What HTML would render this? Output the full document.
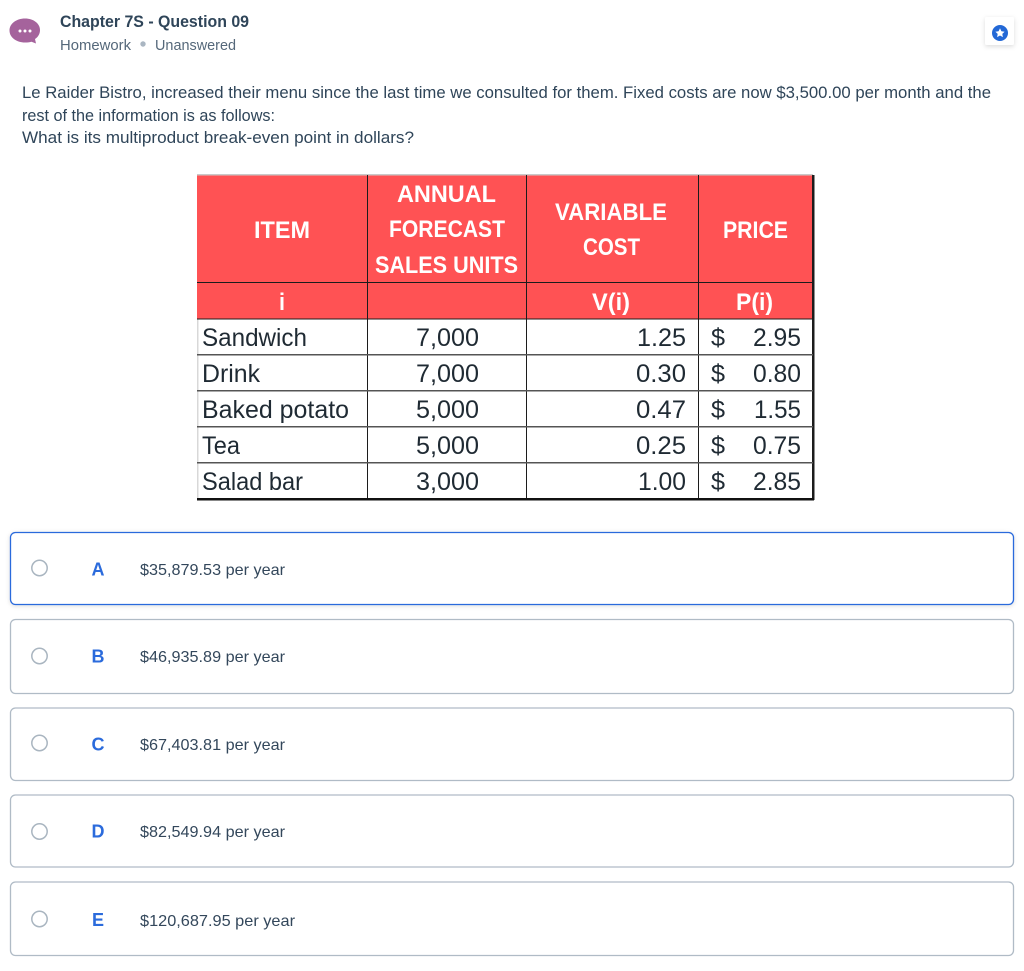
<!DOCTYPE html>
<html><head><meta charset="utf-8">
<style>
html,body{margin:0;padding:0;background:#fff;}
svg{display:block;}
text{font-family:"Liberation Sans",sans-serif;}
.q{font-size:16.5px;fill:#2f4559;}
.o{font-size:16px;fill:#33475b;}
.l{font-size:18px;font-weight:bold;fill:#2b6bdc;text-anchor:middle;}
.h{font-size:24px;font-weight:bold;fill:#fff;}
.c{font-size:25px;fill:#1f2a33;}
</style></head>
<body>
<svg width="1024" height="971" viewBox="0 0 1024 971" xmlns="http://www.w3.org/2000/svg">
<defs><filter id="s" x="-30%" y="-30%" width="160%" height="170%"><feDropShadow dx="0" dy="1.5" stdDeviation="2.5" flood-color="#000" flood-opacity="0.14"/></filter>
<filter id="s2" x="-5%" y="-20%" width="110%" height="140%"><feDropShadow dx="0" dy="1" stdDeviation="2" flood-color="#000" flood-opacity="0.14"/></filter></defs>
<rect width="1024" height="971" fill="#fff"/>

<!-- header -->
<path d="M25 18.500C33.500 18.500 40 23.500 40 30C40 34 38 37 35 39L36 43.500L31.500 41.700C29.500 42.300 27.500 42.500 25 42.500C16.500 42.500 9.500 37.500 9.500 30.500C9.500 23.500 16.500 18.500 25 18.500Z" fill="#a5639c"/>
<circle cx="20" cy="31" r="1.500" fill="#fff"/><circle cx="25" cy="31" r="1.500" fill="#fff"/><circle cx="30" cy="31" r="1.500" fill="#fff"/>
<text x="60" y="27" font-size="16.500" font-weight="bold" fill="#2f4559" textLength="189" lengthAdjust="spacingAndGlyphs">Chapter 7S - Question 09</text>
<text x="60" y="50" font-size="14.500" fill="#55687a" textLength="71" lengthAdjust="spacingAndGlyphs">Homework</text>
<circle cx="143" cy="44" r="2.700" fill="#aab6c2"/>
<text x="155" y="50" font-size="14.500" fill="#55687a" textLength="81" lengthAdjust="spacingAndGlyphs">Unanswered</text>

<rect x="985" y="17" width="29" height="28" rx="2" fill="#fff" filter="url(#s)"/>
<circle cx="1000" cy="33" r="8" fill="#2368d6"/>
<path d="M1000 28.300L1001.400 31.300L1004.600 31.700L1002.300 33.900L1002.900 37.100L1000 35.500L997.100 37.100L997.700 33.900L995.400 31.700L998.600 31.300Z" fill="#fff"/>

<!-- question -->
<text class="q" x="22" y="98" textLength="969" lengthAdjust="spacingAndGlyphs">Le Raider Bistro, increased their menu since the last time we consulted for them. Fixed costs are now $3,500.00 per month and the</text>
<text class="q" x="22" y="121" textLength="253" lengthAdjust="spacingAndGlyphs">rest of the information is as follows:</text>
<text class="q" x="22" y="143" textLength="392" lengthAdjust="spacingAndGlyphs">What is its multiproduct break-even point in dollars?</text>

<!-- table -->
<rect x="197" y="175" width="616" height="325" fill="#fff"/>
<rect x="197" y="175" width="616" height="144" fill="#ff5254"/>
<rect x="197" y="174" width="616" height="1.500" fill="#c9c9c9"/>
<rect x="197" y="319" width="1.500" height="180" fill="#d8d8d8"/>
<g fill="#1c1c1c">
<rect x="367" y="175" width="1" height="324"/>
<rect x="526" y="175" width="1" height="324"/>
<rect x="698" y="175" width="1" height="324"/>
<rect x="812" y="175" width="2.500" height="325"/>
<rect x="197" y="282" width="616" height="1"/>
<rect x="197" y="318.500" width="616" height="1"/>
</g>
<g fill="#555">
<rect x="197" y="354" width="616" height="1.500"/>
<rect x="197" y="390" width="616" height="1.500"/>
<rect x="197" y="426" width="616" height="1.500"/>
<rect x="197" y="462" width="616" height="1.500"/>
</g>
<rect x="197" y="498" width="617" height="2.500" fill="#111"/>

<text class="h" x="254" y="238" textLength="56" lengthAdjust="spacingAndGlyphs">ITEM</text>
<text class="h" x="397" y="202" textLength="99" lengthAdjust="spacingAndGlyphs">ANNUAL</text>
<text class="h" x="389" y="237" textLength="116" lengthAdjust="spacingAndGlyphs">FORECAST</text>
<text class="h" x="375" y="273" textLength="143" lengthAdjust="spacingAndGlyphs">SALES UNITS</text>
<text class="h" x="555" y="220" textLength="112" lengthAdjust="spacingAndGlyphs">VARIABLE</text>
<text class="h" x="583" y="255" textLength="57" lengthAdjust="spacingAndGlyphs">COST</text>
<text class="h" x="723" y="238" textLength="65" lengthAdjust="spacingAndGlyphs">PRICE</text>
<text class="h" x="279" y="310" textLength="6" lengthAdjust="spacingAndGlyphs">i</text>
<text class="h" x="592" y="310" textLength="38" lengthAdjust="spacingAndGlyphs">V(i)</text>
<text class="h" x="736" y="310" textLength="37" lengthAdjust="spacingAndGlyphs">P(i)</text>

<text class="c" x="202" y="346" textLength="105" lengthAdjust="spacingAndGlyphs">Sandwich</text>
<text class="c" x="416" y="346" textLength="63" lengthAdjust="spacingAndGlyphs">7,000</text>
<text class="c" x="637" y="346" textLength="49" lengthAdjust="spacingAndGlyphs">1.25</text>
<text class="c" x="711" y="346" textLength="14" lengthAdjust="spacingAndGlyphs">$</text>
<text class="c" x="753" y="346" textLength="48" lengthAdjust="spacingAndGlyphs">2.95</text>

<text class="c" x="202" y="382" textLength="58" lengthAdjust="spacingAndGlyphs">Drink</text>
<text class="c" x="416" y="382" textLength="63" lengthAdjust="spacingAndGlyphs">7,000</text>
<text class="c" x="636" y="382" textLength="50" lengthAdjust="spacingAndGlyphs">0.30</text>
<text class="c" x="711" y="382" textLength="14" lengthAdjust="spacingAndGlyphs">$</text>
<text class="c" x="753" y="382" textLength="48" lengthAdjust="spacingAndGlyphs">0.80</text>

<text class="c" x="202" y="418" textLength="147" lengthAdjust="spacingAndGlyphs">Baked potato</text>
<text class="c" x="416" y="418" textLength="63" lengthAdjust="spacingAndGlyphs">5,000</text>
<text class="c" x="636" y="418" textLength="50" lengthAdjust="spacingAndGlyphs">0.47</text>
<text class="c" x="711" y="418" textLength="14" lengthAdjust="spacingAndGlyphs">$</text>
<text class="c" x="754" y="418" textLength="47" lengthAdjust="spacingAndGlyphs">1.55</text>

<text class="c" x="202" y="454" textLength="38" lengthAdjust="spacingAndGlyphs">Tea</text>
<text class="c" x="416" y="454" textLength="63" lengthAdjust="spacingAndGlyphs">5,000</text>
<text class="c" x="636" y="454" textLength="50" lengthAdjust="spacingAndGlyphs">0.25</text>
<text class="c" x="711" y="454" textLength="14" lengthAdjust="spacingAndGlyphs">$</text>
<text class="c" x="753" y="454" textLength="48" lengthAdjust="spacingAndGlyphs">0.75</text>

<text class="c" x="202" y="490" textLength="101" lengthAdjust="spacingAndGlyphs">Salad bar</text>
<text class="c" x="416" y="490" textLength="63" lengthAdjust="spacingAndGlyphs">3,000</text>
<text class="c" x="638" y="490" textLength="48" lengthAdjust="spacingAndGlyphs">1.00</text>
<text class="c" x="711" y="490" textLength="14" lengthAdjust="spacingAndGlyphs">$</text>
<text class="c" x="753" y="490" textLength="48" lengthAdjust="spacingAndGlyphs">2.85</text>

<!-- options -->
<rect x="10.500" y="532.500" width="1003" height="72" rx="5" fill="#fff" stroke="#2b6bdc" stroke-width="1.300" filter="url(#s2)"/>
<rect x="10.500" y="619.500" width="1003" height="74" rx="5" fill="#fff" stroke="#b0bbc6" stroke-width="1.300"/>
<rect x="10.500" y="708" width="1003" height="72.500" rx="5" fill="#fff" stroke="#b0bbc6" stroke-width="1.300"/>
<rect x="10.500" y="795" width="1003" height="72" rx="5" fill="#fff" stroke="#b0bbc6" stroke-width="1.300"/>
<rect x="10.500" y="882" width="1003" height="73.500" rx="5" fill="#fff" stroke="#b0bbc6" stroke-width="1.300"/>

<g fill="#fff" stroke="#a9b5c0" stroke-width="1.500">
<circle cx="39.500" cy="568" r="7.700"/>
<circle cx="39.500" cy="656" r="7.700"/>
<circle cx="39.500" cy="743" r="7.700"/>
<circle cx="39.500" cy="831.500" r="7.700"/>
<circle cx="39.500" cy="919" r="7.700"/>
</g>

<text class="l" x="98" y="575.500">A</text>
<text class="l" x="98" y="662.500">B</text>
<text class="l" x="98" y="750.500">C</text>
<text class="l" x="98" y="837.500">D</text>
<text class="l" x="98" y="926">E</text>

<text class="o" x="140" y="575" textLength="145" lengthAdjust="spacingAndGlyphs">$35,879.53 per year</text>
<text class="o" x="140" y="662" textLength="145" lengthAdjust="spacingAndGlyphs">$46,935.89 per year</text>
<text class="o" x="140" y="750" textLength="145" lengthAdjust="spacingAndGlyphs">$67,403.81 per year</text>
<text class="o" x="140" y="837" textLength="145" lengthAdjust="spacingAndGlyphs">$82,549.94 per year</text>
<text class="o" x="140" y="926" textLength="155" lengthAdjust="spacingAndGlyphs">$120,687.95 per year</text>
</svg>
</body></html>
